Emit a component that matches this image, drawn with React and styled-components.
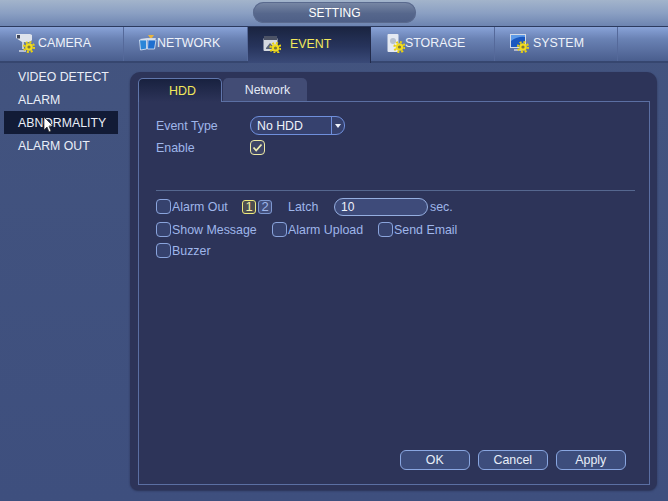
import React from 'react';
import styled, { createGlobalStyle } from 'styled-components';

const Global = createGlobalStyle`
  html, body { margin: 0; padding: 0; background: #3f5180; }
  * { box-sizing: border-box; }
`;
const Screen = styled.div`
  position: relative; width: 668px; height: 501px; overflow: hidden;
  font-family: "Liberation Sans", Arial, sans-serif; font-size: 13px;
  background: linear-gradient(180deg, #43547f 0%, #3e4f7e 100%);
  display: flex; flex-direction: column;
`;
const TitleBar = styled.div`
  height: 27px; display: flex; justify-content: center; padding: 2px 0 0 1px;
  background: linear-gradient(180deg, #a3b4cb 0%, #8ba0c3 50%, #6d84b1 100%);
  border-bottom: 1px solid #2c3a5e;
`;
const TitlePill = styled.div`
  width: 163px; height: 21px; border-radius: 11px; color: #fff; font-size: 12px;
  display: flex; align-items: center; justify-content: center;
  background: linear-gradient(180deg, #7a89a6 0%, #56678c 55%, #4d5e86 100%);
  box-shadow: inset 0 0 0 1px #5a6a8e;
`;
const TabBar = styled.div`
  height: 36px; display: flex; flex: none;
  background: linear-gradient(180deg, #89a3d8 0%, #6a82b4 35%, #4a5e8e 100%);
  border-bottom: 2px solid #36466f;
`;
const MainTab = styled.div`
  width: ${p => p.$w}px; display: flex; align-items: center; padding-left: ${p => p.$pad}px;
  gap: ${p => p.$gap}px; font-size: 12.4px; color: ${p => p.$active ? '#f2e85c' : '#eef2fa'};
  border-right: 1px solid ${p => p.$active ? '#222b4b' : '#55699a'};
  padding-bottom: 2px;
  background: ${p => p.$active ? 'linear-gradient(180deg, #1a2440 0%, #27345c 55%, #3a4a78 100%)' : 'transparent'};
  margin-bottom: ${p => p.$active ? '-2px' : '0'};
`;
const Body = styled.div`
  flex: 1; display: flex; padding: 2px 11px 11px 4px;
`;
const Sidebar = styled.div`
  width: 126px; display: flex; flex-direction: column;
`;
const SideItem = styled.div`
  width: 114px; height: 23px; padding-left: 14px; display: flex; align-items: center;
  color: #eaeef8; font-size: 12.3px;
  background: ${p => p.$active ? '#121b36' : 'transparent'};
`;
const Panel = styled.div`
  flex: 1; margin-top: 7px; background: #2d3459; border-radius: 10px 10px 8px 8px;
  padding: 6px 7px 5px 8px; display: flex; flex-direction: column;
  box-shadow: 0 1px 2px #2a3356;
`;
const SubTabs = styled.div`
  height: 24px; margin-bottom: -1px; display: flex; gap: 1px; flex: none; align-items: stretch;
`;
const SubTab = styled.div`
  width: 84px; display: flex; align-items: center; justify-content: center; font-size: 12.4px;
  padding-left: 5px;
  border-radius: 5px 5px 0 0; position: relative; z-index: 1;
  color: ${p => p.$active ? '#f2e85c' : '#e4e9f5'};
  background: ${p => p.$active ? 'linear-gradient(180deg, #18213f 0%, #2d3459 100%)' : '#424c75'};
  border: ${p => p.$active ? '1px solid #6076ab' : 'none'};
  border-bottom: ${p => p.$active ? 'none' : '1px solid #5b6fa3'};
`;
const Frame = styled.div`
  flex: 1; border: 1px solid #5b6fa3; padding: 12px 14px 14px 17px;
  display: flex; flex-direction: column; position: relative;
`;
const Line = styled.div`
  display: flex; align-items: center; flex: none; height: ${p => p.$h || 23}px; color: #9fb6ea; font-size: 12.4px;
`;
const FieldLabel = styled.span`
  width: 94px; flex: none;
`;
const Select = styled.div`
  width: 95px; height: 19px; border: 1px solid #6f8fdc; border-radius: 9px; color: #eef2fa;
  display: flex; align-items: center; padding-left: 6px; background: #36416e; font-size: 12.3px;
`;
const SelectText = styled.span`
  flex: 1;
`;
const SelectArrow = styled.span`
  width: 13px; height: 100%; border-left: 1px solid #6f8fdc; display: flex; align-items: center; justify-content: center;
  &::after { content: ''; border: 3.5px solid transparent; border-top: 4px solid #eef2fa; border-bottom: 0; }
`;
const Check = styled.span`
  width: 15px; height: 15px; flex: none; border-radius: 4px; background: ${p => p.$on ? '#3e4566' : '#36426e'};
  border: 1.5px solid ${p => p.$on ? '#ece9a5' : '#8aa4dc'};
  display: flex; align-items: center; justify-content: center;
`;
const Divider = styled.div`
  height: 1px; flex: none; background: #55678f; margin: 32px 0 4px 0;
`;
const CheckItem = styled.span`
  display: flex; align-items: center; gap: 1px; width: ${p => p.$w ? p.$w + 'px' : 'auto'}; flex: none;
`;
const NumBtn = styled.span`
  width: 14px; height: 14px; border-radius: 3px; font-size: 13px; display: flex; align-items: center; justify-content: center;
  color: ${p => p.$on ? '#f4f0a0' : '#9fb6ea'}; background: ${p => p.$on ? '#4c4d50' : '#434f7c'};
  border: 1px solid ${p => p.$on ? '#ece97c' : '#7e98d0'}; margin-right: 2px;
`;
const LatchLabel = styled.span`
  margin-left: 14px; width: 46px;
`;
const Input = styled.div`
  width: 94px; height: 18px; border: 1px solid #95aee0; border-radius: 9px; background: #3e4b7a;
  color: #eef2fa; display: flex; align-items: center; padding-left: 6px; font-size: 12px;
`;
const Sec = styled.span`
  margin-left: 2px; color: #9fb6ea;
`;
const Footer = styled.div`
  margin-top: auto; display: flex; justify-content: flex-end; gap: 7.5px; padding-right: 9px;
`;
const Btn = styled.div`
  width: 70.5px; height: 20px; border: 1px solid #89a6e0; border-radius: 6px; color: #e8edf8; font-size: 12.4px;
  display: flex; align-items: center; justify-content: center; background: #3d4d7c;
`;
const Cursor = styled.svg`
  position: absolute; left: 43px; top: 116px;
`;

const Gear = ({ x, y }) => (
  <g transform={`translate(${x} ${y})`}>
    <circle r="5" fill="none" stroke="#e8d012" strokeWidth="2.2" strokeDasharray="2 1.9" />
    <circle r="3.8" fill="#f2dc1e" />
    <circle r="1.6" fill="#7d7a3a" />
  </g>
);
const IconCamera = () => (
  <svg width="20" height="20" viewBox="0 0 20 20">
    <path d="M1 1h14l2 1v5l-2 2H7L1 5z" fill="#dfe4ec" />
    <rect x="2" y="2" width="3" height="3.5" fill="#3e4558" />
    <path d="M8 9v7" stroke="#c6ccd8" strokeWidth="2" />
    <path d="M4 18h7" stroke="#d6dbe6" strokeWidth="1.5" />
    <Gear x={14} y={14} />
  </svg>
);
const IconNetwork = () => (
  <svg width="18" height="18" viewBox="0 0 18 18">
    <path d="M1 5l7-1 9 0-1 2H2z" fill="#cfd9e8" />
    <path d="M9 1h6l-2 3h-2z" fill="#e8b33c" />
    <path d="M0.5 6h7v9l-6 1z" fill="#2a86d8" stroke="#dfe8f5" strokeWidth="0.8" />
    <path d="M9 6h8l-1.5 9H8.5z" fill="#1f6fd0" stroke="#dfe8f5" strokeWidth="0.8" />
  </svg>
);
const IconEvent = () => (
  <svg width="18" height="18" viewBox="0 0 18 18">
    <rect x="0.5" y="3" width="14" height="13" rx="1" fill="#d5d9e0" />
    <rect x="1" y="1" width="13" height="4" fill="#4c5366" />
    <path d="M3 13l4-5 3 3 2-1v4H3z" fill="#5a6478" />
    <Gear x={12.5} y={13} />
  </svg>
);
const IconStorage = () => (
  <svg width="18" height="20" viewBox="0 0 18 20">
    <rect x="0.5" y="1" width="11" height="18" rx="1" fill="#e4e9f2" />
    <circle cx="6" cy="8" r="3" fill="#b6c0d0" />
    <Gear x={12.5} y={14} />
  </svg>
);
const IconSystem = () => (
  <svg width="20" height="20" viewBox="0 0 20 20">
    <rect x="1" y="1" width="16" height="14" fill="#d5dbe6" />
    <rect x="2" y="2" width="14" height="12" fill="#1b58c0" />
    <path d="M2 8Q9 3 16 4V2H2z" fill="#5d9ae8" />
    <path d="M5 17h8" stroke="#ccd" strokeWidth="1.5" />
    <Gear x={14} y={14} />
  </svg>
);

export default function App() {
  return (
    <Screen>
      <Global />
      <TitleBar><TitlePill>SETTING</TitlePill></TitleBar>
      <TabBar>
        <MainTab $w={124} $pad={15} $gap={3}><IconCamera />CAMERA</MainTab>
        <MainTab $w={124} $pad={15} $gap={0}><IconNetwork />NETWORK</MainTab>
        <MainTab $w={123} $pad={15} $gap={9} $active><IconEvent />EVENT</MainTab>
        <MainTab $w={124} $pad={16} $gap={0}><IconStorage />STORAGE</MainTab>
        <MainTab $w={123} $pad={14} $gap={4}><IconSystem />SYSTEM</MainTab>
      </TabBar>
      <Body>
        <Sidebar>
          <SideItem>VIDEO DETECT</SideItem>
          <SideItem>ALARM</SideItem>
          <SideItem $active>ABNORMALITY</SideItem>
          <SideItem>ALARM OUT</SideItem>
        </Sidebar>
        <Panel>
          <SubTabs>
            <SubTab $active>HDD</SubTab>
            <SubTab>Network</SubTab>
          </SubTabs>
          <Frame>
            <Line><FieldLabel>Event Type</FieldLabel><Select><SelectText>No HDD</SelectText><SelectArrow /></Select></Line>
            <Line $h={21}><FieldLabel>Enable</FieldLabel>
              <Check $on><svg width="11" height="9" viewBox="0 0 11 9"><path d="M1.5 4.5L4.2 7.5 9.5 1.5" fill="none" stroke="#f0eeb0" strokeWidth="1.8" /></svg></Check>
            </Line>
            <Divider />
            <Line>
              <CheckItem $w={86}><Check />Alarm Out</CheckItem>
              <NumBtn $on>1</NumBtn><NumBtn>2</NumBtn>
              <LatchLabel>Latch</LatchLabel>
              <Input>10</Input><Sec>sec.</Sec>
            </Line>
            <Line>
              <CheckItem $w={116}><Check />Show Message</CheckItem>
              <CheckItem $w={106}><Check />Alarm Upload</CheckItem>
              <CheckItem><Check />Send Email</CheckItem>
            </Line>
            <Line $h={19}><CheckItem><Check />Buzzer</CheckItem></Line>
            <Footer><Btn>OK</Btn><Btn>Cancel</Btn><Btn>Apply</Btn></Footer>
          </Frame>
        </Panel>
      </Body>
      <Cursor width="12" height="18" viewBox="0 0 12 18">
        <path d="M1 1v13l3-3 2 5 2-1-2-5h4z" fill="#fff" stroke="#222" strokeWidth="0.7" />
      </Cursor>
    </Screen>
  );
}
